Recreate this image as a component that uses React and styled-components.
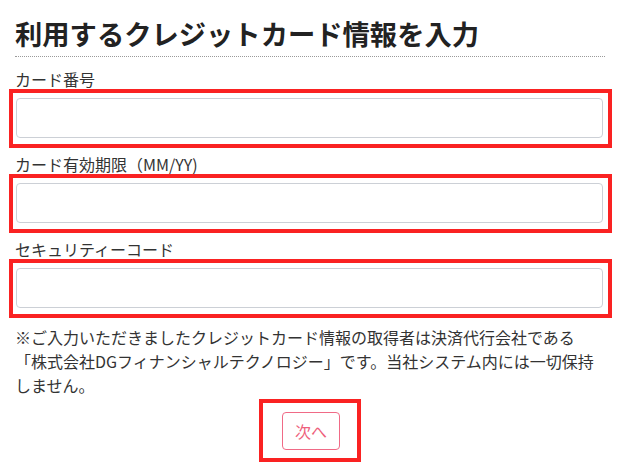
import styled, { createGlobalStyle } from 'styled-components';
import React from 'react';

const GlobalStyle = createGlobalStyle`
  body {
    margin: 0;
    background: #ffffff;
    font-family: "Noto Sans CJK JP", "Noto Sans", sans-serif;
    color: #333333;
  }
`;

const fields = [
  { id: 'number', label: 'カード番号' },
  { id: 'expire', label: 'カード有効期限（MM/YY)' },
  { id: 'cvc', label: 'セキュリティーコード' },
];

export default function App() {
  return (
    <>
      <GlobalStyle />
      <Form>
        <Titulo>利用するクレジットカード情報を入力</Titulo>
        {fields.map((f, i) => (
          <Campo key={f.id}>
            <Rotulo $first={i === 0} htmlFor={f.id}>{f.label}</Rotulo>
            <Destaque>
              <Entrada id={f.id} type="text" />
            </Destaque>
          </Campo>
        ))}
        <Aviso>
          ※ご入力いただきましたクレジットカード情報の取得者は決済代行会社である「株式会社DGフィナンシャルテクノロジー」です。当社システム内には一切保持しません。
        </Aviso>
        <Rodape>
          <BotaoDestaque>
            <Botao type="button">次へ</Botao>
          </BotaoDestaque>
        </Rodape>
      </Form>
    </>
  );
}

const Form = styled.div`
  width: 590px;
  margin-left: 15px;
  padding-top: 14px;
`;

const Titulo = styled.h1`
  margin: 0;
  font-size: 27.3px;
  line-height: 38px;
  font-weight: bold;
  color: #222222;
  padding-bottom: 4px;
  border-bottom: 1px dotted #9a9a9a;
  white-space: nowrap;
`;

const Campo = styled.div`
  display: flex;
  flex-direction: column;
`;

const Rotulo = styled.label`
  display: block;
  margin-top: ${(p) => (p.$first ? '12px' : '6px')};
  font-size: 16px;
  line-height: 20px;
  color: #333333;
`;

const Destaque = styled.div`
  margin: 0 -7px 0 -6px;
  border: 4px solid #fa2222;
  padding: 5px 5px 6px 3px;
  display: flex;
`;

const Entrada = styled.input`
  flex: 1;
  box-sizing: border-box;
  height: 40px;
  border: 1px solid #ccd0d6;
  border-radius: 4px;
  background: #ffffff;
  padding: 0 10px;
  font-size: 16px;
  font-family: inherit;
  outline: none;
`;

const Aviso = styled.p`
  margin: 7px 0 0 0;
  font-size: 16px;
  line-height: 24px;
  color: #333333;
`;

const Rodape = styled.div`
  display: flex;
  justify-content: center;
  margin-top: 2px;
`;

const BotaoDestaque = styled.div`
  border: 4px solid #fa2222;
  padding: 9px 17px 8px 19px;
  display: flex;
`;

const Botao = styled.button`
  box-sizing: border-box;
  height: 38px;
  padding: 0 12px;
  border: 1px solid #f06a86;
  border-radius: 4px;
  background: #ffffff;
  color: #ee5f7c;
  font-family: inherit;
  font-size: 16px;
  line-height: 24px;
  cursor: pointer;
`;
